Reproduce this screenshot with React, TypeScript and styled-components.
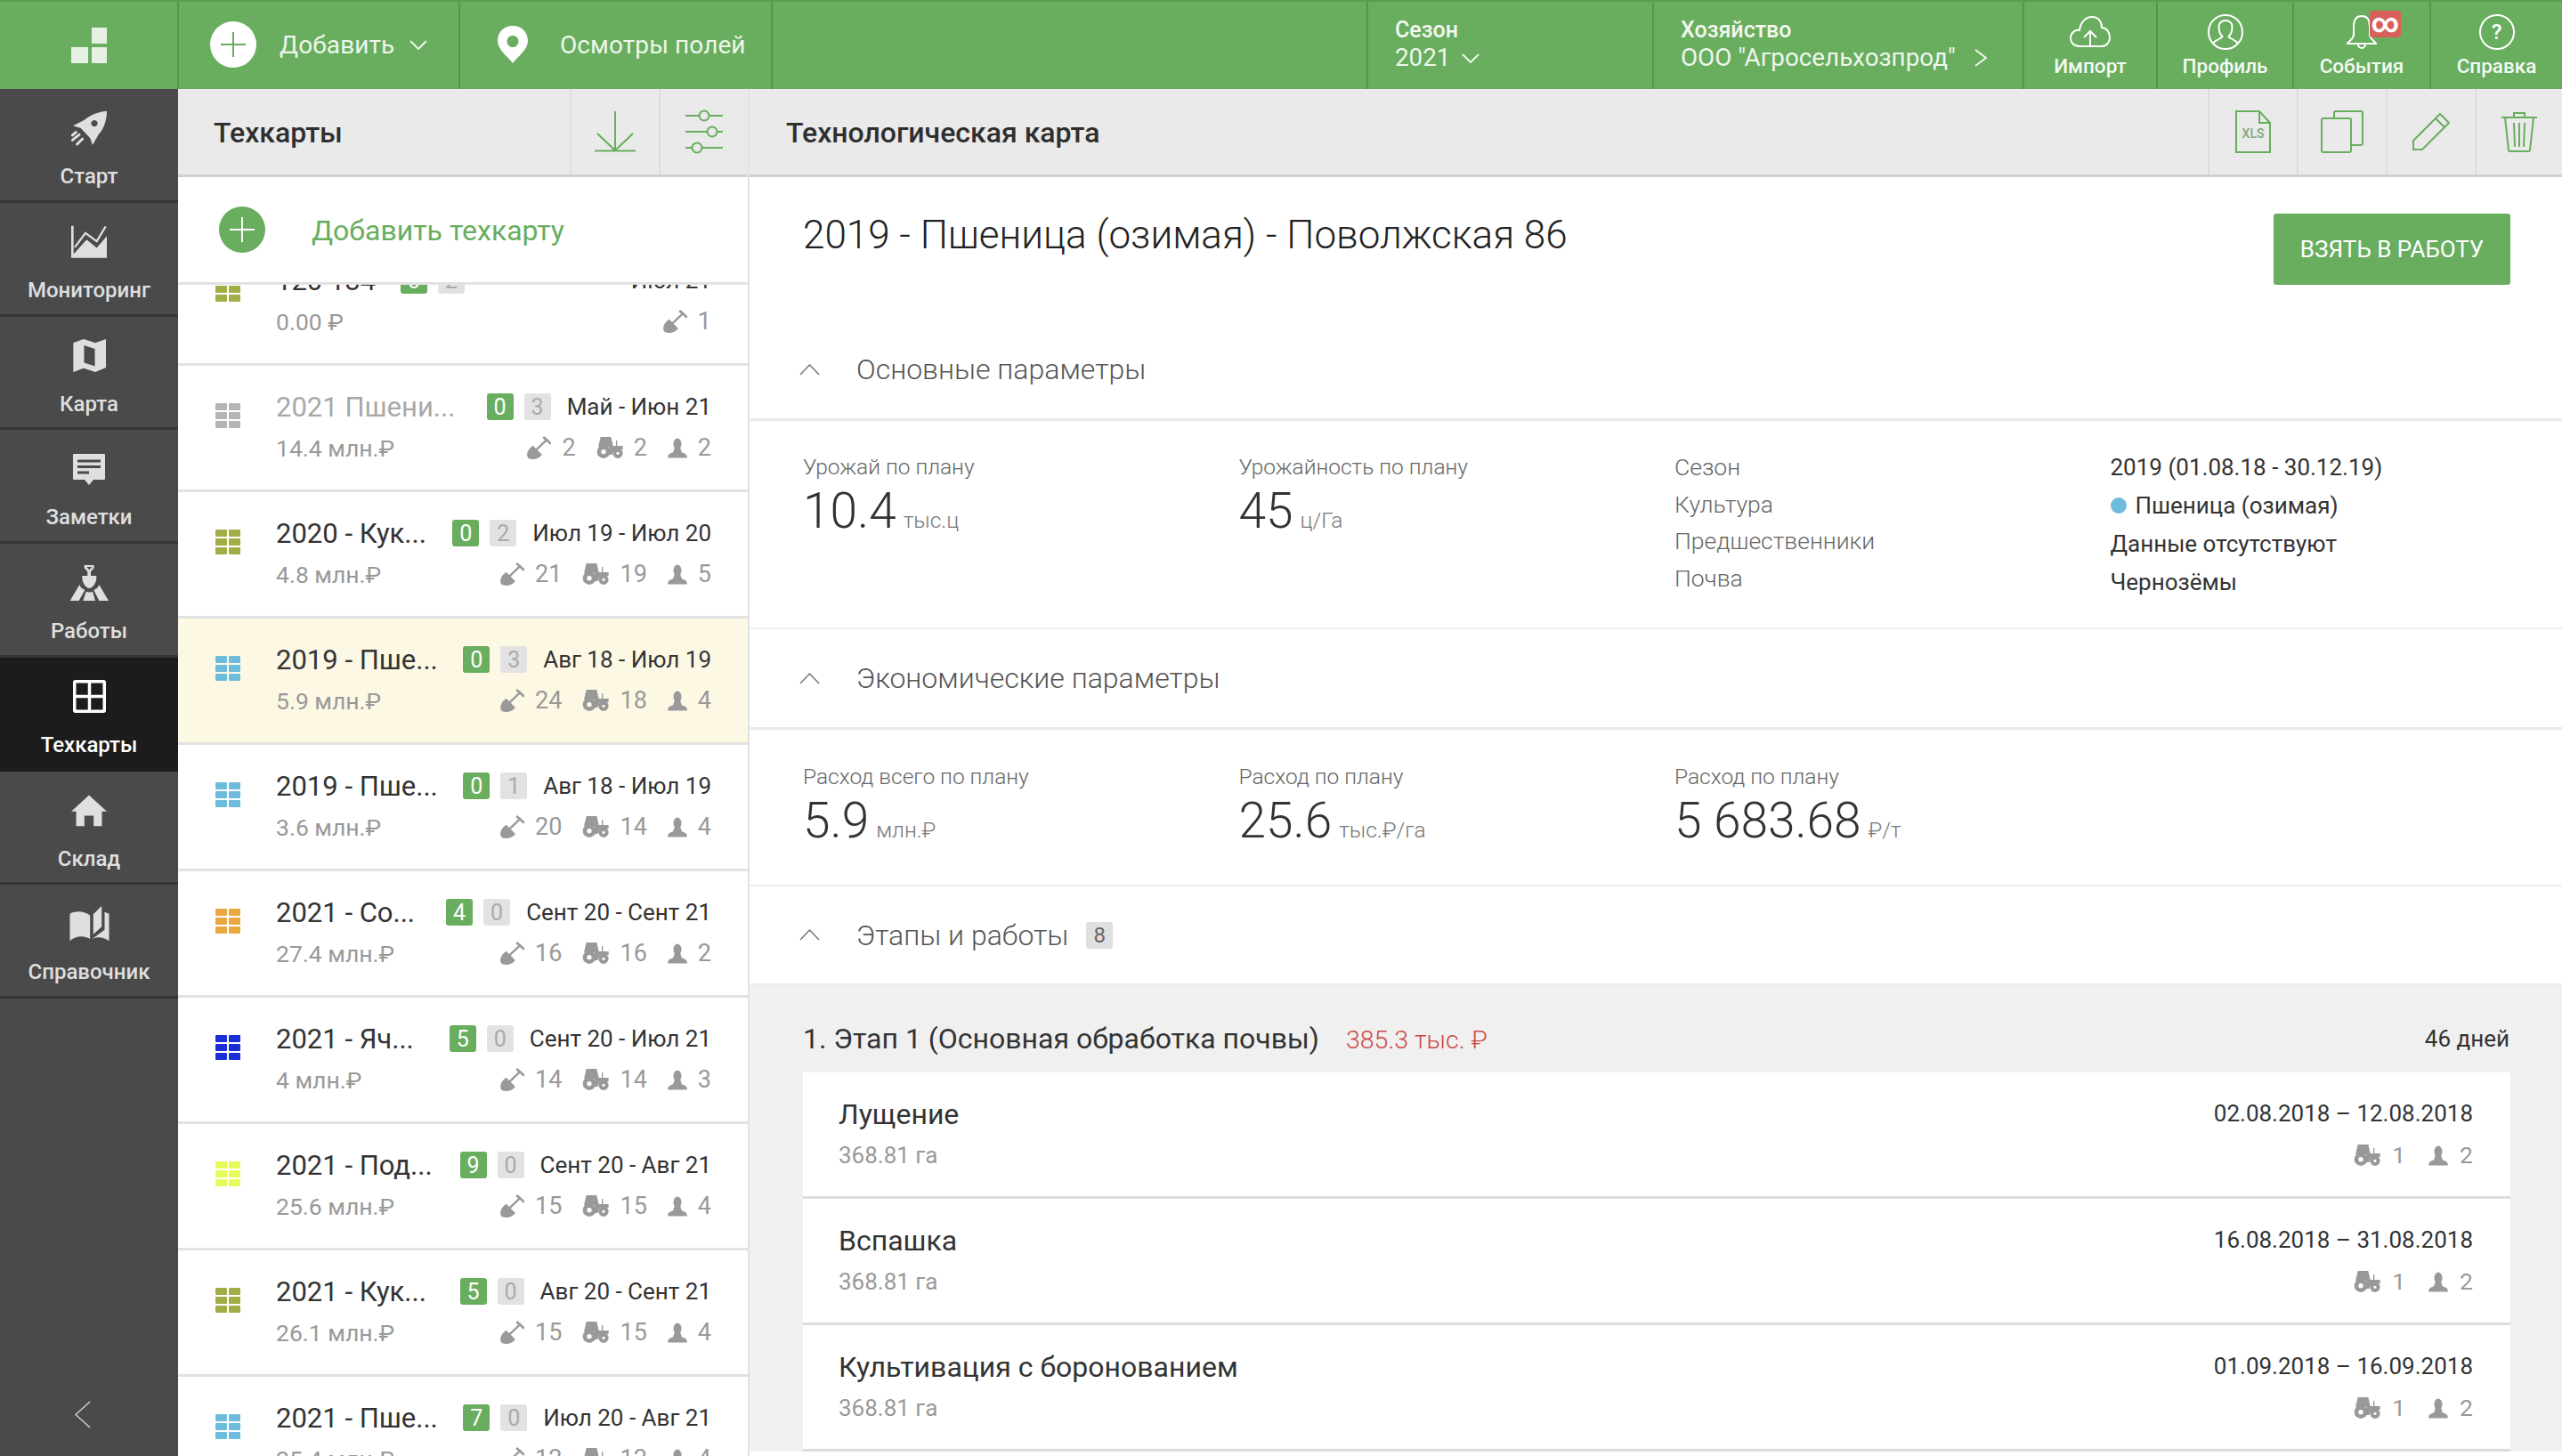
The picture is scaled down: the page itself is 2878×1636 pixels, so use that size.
import React from 'react';
import styled, { createGlobalStyle } from 'styled-components';

const GREEN = '#69ad5e';

const Global = createGlobalStyle`
  html, body { margin: 0; padding: 0; background: #fff; }
  body { font-family: Roboto, "Noto Sans", sans-serif; color: #333; }
  * { box-sizing: border-box; }
`;

const Page = styled.div`
  width: 2878px; height: 1636px; display: flex; flex-direction: column; overflow: hidden;
`;

/* ---------- top bar ---------- */
const TopBar = styled.header`
  height: 100px; flex: none; display: flex; background: ${GREEN}; color: #fff;
  border-top: 2px solid #5a9c50;
`;
const TopCell = styled.div<{ $w?: number; $grow?: boolean }>`
  ${p => (p.$w ? `width: ${p.$w}px; flex: none;` : '')}
  ${p => (p.$grow ? 'flex: 1;' : '')}
  display: flex; align-items: center; border-right: 2px solid #55964a;
`;
const LogoCell = styled(TopCell)`justify-content: center;`;
const ActionCell = styled(TopCell)<{ $pad: number }>`
  padding-left: ${p => p.$pad}px; margin-top: -2px;
`;
const ActionText = styled.span<{ $ml: number }>`
  font-size: 28px; color: #eef6ec; letter-spacing: .1px; white-space: nowrap; margin-left: ${p => p.$ml}px;
`;
const ActionChevron = styled.span`margin-left: 17px; line-height: 0; color: #eef6ec;`;
const InfoCell = styled(TopCell)<{ $pad: number }>`
  flex-direction: column; align-items: flex-start; justify-content: flex-start;
  padding-left: ${p => p.$pad}px; padding-top: 16px;
`;
const InfoLabel = styled.div`font-size: 25px; font-weight: 500; line-height: 31px; color: #f2f8f0;`;
const InfoValue = styled.div`
  font-size: 27.8px; line-height: 32px; display: flex; align-items: center; color: #eef6ec; white-space: nowrap;
`;
const InfoChevron = styled.span<{ $ml: number }>`margin-left: ${p => p.$ml}px; line-height: 0;`;
const NavCell = styled(TopCell)`
  flex-direction: column; justify-content: flex-start; position: relative; padding-top: 13px;
`;
const LastNavCell = styled(NavCell)`border-right: none;`;
const NavIcon = styled.div`height: 42px; display: flex; align-items: center; justify-content: center;`;
const NavLabel = styled.div`font-size: 22.5px; font-weight: 500; line-height: 28px; margin-top: 3px; color: #f4f9f3;`;
const InfinityBadge = styled.div`
  position: absolute; left: 85px; top: 10px; width: 35px; height: 30px; border-radius: 3px;
  background: #d9605a; color: #fff; font-size: 30px; font-weight: 700; line-height: 27px; text-align: center;
`;

/* ---------- body ---------- */
const Body = styled.div`flex: 1; display: flex; min-height: 0;`;

const Sidebar = styled.nav`
  width: 200px; flex: none; background: #4a4a4a; display: flex; flex-direction: column;
`;
const SideItem = styled.div<{ $active?: boolean }>`
  height: 127.75px; flex: none; display: flex; flex-direction: column; align-items: center;
  padding-top: 24px; background: ${p => (p.$active ? '#1c1c1c' : 'transparent')};
  border-bottom: 3px solid ${p => (p.$active ? '#1c1c1c' : '#353535')};
  color: ${p => (p.$active ? '#fff' : '#dfdfdf')};
`;
const SideIcon = styled.div`height: 40px; display: flex; align-items: center; justify-content: center;`;
const SideLabel = styled.div`font-size: 24px; font-weight: 500; line-height: 30px; margin-top: 19px;`;
const SideFooter = styled.div`margin-top: auto; padding: 0 0 31px 84px; color: #cfcfcf; line-height: 0;`;

const HeaderBar = styled.div`
  height: 99px; flex: none; display: flex; align-items: center; background: #eaeaea;
  border-bottom: 3px solid #cfcfcf;
`;
const HeaderTitle = styled.div<{ $pad: number }>`
  flex: 1; padding: 2px 0 0 ${p => p.$pad}px; font-size: 32px; font-weight: 500; color: #2f2f2f; white-space: nowrap;
`;
const HeaderBtn = styled.div<{ $w: number }>`
  width: ${p => p.$w}px; height: 96px; flex: none; display: flex; align-items: center; justify-content: center;
  border-left: 2px solid #dcdcdc;
`;

/* ---------- list ---------- */
const ListPanel = styled.section`
  width: 642px; flex: none; display: flex; flex-direction: column; border-right: 2px solid #e2e2e2; min-height: 0;
`;
const AddRow = styled.div`
  height: 121px; flex: none; display: flex; align-items: center; padding-left: 46px; gap: 52px;
  border-bottom: 3px solid #e2e2e2; background: #fff; position: relative; z-index: 1;
`;
const AddText = styled.div`font-size: 32px; color: ${GREEN}; padding-top: 2px;`;
const ListScroll = styled.div`flex: 1; overflow: hidden; min-height: 0;`;
const ListInner = styled.div`margin-top: -51px;`;
const Row = styled.div<{ $active?: boolean }>`
  height: 142px; display: flex; padding: 0 41px 0 42px;
  background: ${p => (p.$active ? '#fdf8e4' : '#fff')};
  border-bottom: 3px solid #e2e2e2;
`;
const RowIcon = styled.div`width: 28px; flex: none; margin: 42px 40px 0 0; line-height: 0;`;
const RowMain = styled.div`flex: 1; min-width: 0; padding-top: 26px;`;
const RowLine = styled.div`display: flex; align-items: center; justify-content: space-between; height: 40px;`;
const SubLine = styled(RowLine)`margin-top: 6px;`;
const RowTitle = styled.div<{ $muted?: boolean }>`
  font-size: 31px; white-space: nowrap; color: ${p => (p.$muted ? '#a8a8a8' : '#333')};
`;
const RowRight = styled.div`display: flex; align-items: center; gap: 12px;`;
const Badge = styled.div<{ $green?: boolean }>`
  width: 30px; height: 30px; border-radius: 3px; display: flex; align-items: center; justify-content: center;
  font-size: 25px; background: ${p => (p.$green ? GREEN : '#e2e2e2')}; color: ${p => (p.$green ? '#fff' : '#aaa')};
`;
const RowDate = styled.div<{ $min?: number }>`
  font-size: 26px; color: #333; margin-left: 6px; white-space: nowrap; text-align: right;
  ${p => (p.$min ? `min-width: ${p.$min}px;` : '')}
`;
const Money = styled.div`font-size: 26.5px; color: #999;`;
const StatGroup = styled.div`display: flex; align-items: center; gap: 23px;`;
const Stat = styled.div`display: flex; align-items: center; gap: 12px; font-size: 27px; color: #999; line-height: 1;`;

/* ---------- detail ---------- */
const Detail = styled.main`flex: 1; min-width: 0; display: flex; flex-direction: column; min-height: 0;`;
const DetailScroll = styled.div`flex: 1; overflow: hidden; min-height: 0;`;
const TitleRow = styled.div`
  height: 161px; display: flex; justify-content: space-between; align-items: flex-start; padding: 40px 58px 0 60px;
`;
const PageTitle = styled.h1`margin: 0; font-size: 44px; font-weight: 300; line-height: 50px; color: #222;`;
const TakeBtn = styled.button`
  width: 266px; height: 80px; margin-top: 1px; border: none; border-radius: 3px; background: ${GREEN}; color: #fff;
  font-family: inherit; font-size: 26px; padding: 0;
`;
const SectionHead = styled.div<{ $border?: boolean }>`
  height: ${p => (p.$border ? 113 : 109)}px; display: flex; align-items: center; padding-left: 56px;
  ${p => (p.$border ? 'border-bottom: 3px solid #eaeaea;' : '')}
`;
const SectionTitle = styled.div`
  font-size: 32px; font-weight: 300; color: #555; margin-left: 41px; margin-right: 20px;
`;
const CountBadge = styled.div`
  width: 30px; height: 30px; border-radius: 3px; background: #e0e0e0; color: #666;
  font-size: 24px; display: flex; align-items: center; justify-content: center;
`;
const StatBlock = styled.div<{ $h: number; $pt: number }>`
  height: ${p => p.$h}px; padding: ${p => p.$pt}px 0 0 60px;
  display: grid; grid-template-columns: repeat(4, 489.5px); align-content: start;
  border-bottom: 2px solid #f0f0f0;
`;
const Label = styled.div`font-size: 24.5px; font-weight: 300; line-height: 32px; color: #666; white-space: nowrap;`;
const KeyLabel = styled(Label)`font-size: 26.5px;`;
const Value = styled.div`
  font-size: 55px; font-weight: 300; line-height: 60px; margin-top: 3px; color: #333; white-space: nowrap;
`;
const Unit = styled.span`font-size: 24.5px; font-weight: 300; color: #777; margin-left: 8px;`;
const KeyCol = styled.div`display: flex; flex-direction: column; gap: 9.5px;`;
const ValCol = styled.div`display: flex; flex-direction: column; gap: 11px;`;
const ValText = styled.div`
  font-size: 26px; line-height: 32px; color: #333; display: flex; align-items: center; white-space: nowrap;
`;
const Dot = styled.span`
  width: 18px; height: 18px; border-radius: 50%; background: #6dbcdc; margin-right: 10px; flex: none;
`;
const Stages = styled.div`background: #f0f0f0; border-top: 2px solid #ececec; padding: 0 58px 0 60px;`;
const StageHead = styled.div`
  height: 98px; padding-top: 22px; display: flex; align-items: center; justify-content: space-between;
`;
const StageLeft = styled.div`display: flex; align-items: center; gap: 30px;`;
const StageTitle = styled.div`font-size: 32px; color: #333; white-space: nowrap;`;
const StageCost = styled.div`font-size: 28.5px; font-weight: 300; color: #cc4a46; white-space: nowrap; padding-top: 3px;`;
const StageDays = styled.div`font-size: 26px; color: #333; padding-right: 1px;`;
const Card = styled.div`
  height: 142px; background: #fff; border-bottom: 3px solid #dcdcdc; display: flex; justify-content: space-between;
  padding: 26px 42px 0 40px;
`;
const CardCol = styled.div<{ $right?: boolean }>`
  display: flex; flex-direction: column; ${p => (p.$right ? 'align-items: flex-end;' : '')}
`;
const CardTitle = styled.div`font-size: 32px; line-height: 42px; color: #333;`;
const CardSub = styled.div`font-size: 26px; line-height: 36px; margin-top: 7px; color: #999;`;
const CardDate = styled.div`font-size: 26px; line-height: 36px; margin-top: 2px; color: #333;`;
const CardStats = styled(StatGroup)`margin-top: 11px; height: 36px; gap: 26px;`;
const CardStat = styled(Stat)`font-size: 26.5px; gap: 13px;`;

/* ---------- icons ---------- */
const Shovel = () => (
  <svg width="27" height="27" viewBox="580 150 80 80" fill="#999">
    <path d="M600 182 L630 212 C622 226 592 232 583 222 C575 210 586 190 600 182Z" />
    <path d="M607 199 L648 160" stroke="#999" strokeWidth="7" fill="none" />
    <path d="M634 153 L660 176" stroke="#999" strokeWidth="8" fill="none" />
  </svg>
);
const Tractor = () => (
  <svg width="30" height="24" viewBox="336 582 90 72" fill="#999">
    <path d="M350 582 L385 582 L392 612 L425 612 L425 624 L396 624 L388 642 L378 642 L378 616 L342 616Z" />
    <circle cx="360" cy="632" r="15" fill="none" stroke="#999" strokeWidth="14" />
    <circle cx="408" cy="637" r="11" fill="none" stroke="#999" strokeWidth="12" />
    <path d="M404 594 V614" stroke="#999" strokeWidth="4" />
  </svg>
);
const Person = () => (
  <svg width="22" height="23" viewBox="580 584 68 70" fill="#999">
    <ellipse cx="614" cy="605" rx="14" ry="20" />
    <path d="M604 618 L624 618 L629 634 C643 638 649 644 647 653 L581 653 C579 644 585 638 599 634Z" />
  </svg>
);
const CellGrid = ({ color }: { color: string }) => (
  <svg width="28" height="28" viewBox="0 0 28 28" fill={color}>
    {[0, 10, 20].map(y => [0, 15].map(x => <rect key={`${x}-${y}`} x={x} y={y} width="13" height="8" rx="1" />))}
  </svg>
);
const Chevron = ({ dir, w, h, color = 'currentColor', sw = 2 }: { dir: 'up' | 'down' | 'left' | 'right'; w: number; h: number; color?: string; sw?: number }) => {
  const d = {
    down: `M1 1 L${w / 2} ${h - 1} L${w - 1} 1`,
    up: `M1 ${h - 1} L${w / 2} 1 L${w - 1} ${h - 1}`,
    left: `M${w - 1} 1 L1 ${h / 2} L${w - 1} ${h - 1}`,
    right: `M1 1 L${w - 1} ${h / 2} L1 ${h - 1}`,
  }[dir];
  return <svg width={w} height={h} viewBox={`0 0 ${w} ${h}`} fill="none" stroke={color} strokeWidth={sw}><path d={d} /></svg>;
};
const Logo = () => (
  <svg width="40" height="40" viewBox="0 0 40 40" fill="#e6f1e3">
    <rect x="23" y="0" width="17" height="18" /><rect x="0" y="22" width="19" height="18" /><rect x="23" y="22" width="17" height="18" />
  </svg>
);
const PlusCircle = ({ bg, fg }: { bg: string; fg: string }) => (
  <svg width="52" height="52" viewBox="0 0 52 52">
    <circle cx="26" cy="26" r="26" fill={bg} />
    <path d="M26 12 V40 M12 26 H40" stroke={fg} strokeWidth="2" />
  </svg>
);
const Pin = () => (
  <svg width="34" height="42" viewBox="0 0 34 42">
    <path fillRule="evenodd" fill="#fff" d="M17 0 C7 0 0 7 0 17 C0 27 12 35 17 42 C22 35 34 27 34 17 C34 7 27 0 17 0Z M17 11 a6.5 6.5 0 1 0 0.01 0Z" />
  </svg>
);
const Cloud = () => (
  <svg width="46" height="36" viewBox="0 0 46 36" fill="none" stroke="#fff" strokeWidth="2">
    <path d="M11 34 C4 34 1 29 1 25 C1 19 6 15 11 16 C12 7 18 1 25 1 C32 1 36 6 36 13 C41 13 45 18 45 24 C45 30 41 34 36 34Z" />
    <path d="M23 34 V18 M16 24 L23 17 L30 24" />
  </svg>
);
const Profile = () => (
  <svg width="40" height="40" viewBox="0 0 40 40" fill="none" stroke="#fff" strokeWidth="2">
    <circle cx="20" cy="20" r="19" />
    <path d="M6 33 C9 28 15 28 16.5 25 C13 22 12.5 17 12.5 14 C12.5 10 15.5 7 20 7 C24.5 7 27.5 10 27.5 14 C27.5 17 27 22 23.5 25 C25 28 31 28 34 33" />
  </svg>
);
const Bell = () => (
  <svg width="34" height="38" viewBox="0 0 34 38" fill="none" stroke="#fff" strokeWidth="2">
    <path d="M17 1 C10 1 8 7 8 13 V22 C8 27 3 28 1 32 H33 C31 28 26 27 26 22 V13 C26 7 24 1 17 1Z" />
    <path d="M13 33 a4 4 0 0 0 8 0" />
  </svg>
);
const HelpCircle = styled.div`
  width: 40px; height: 40px; border: 2px solid #fff; border-radius: 50%; display: flex; align-items: center;
  justify-content: center; font-size: 24px; font-weight: 500; color: #fff;
`;
const Rocket = () => (
  <svg width="40" height="40" viewBox="120 40 120 120" fill="currentColor">
    <path fillRule="evenodd" d="M240 42 C205 46 180 58 165 72 L126 92 L152 100 L184 134 L192 157 L212 122 C232 100 240 70 240 42Z M198 73 a11 11 0 1 0 0.01 0Z" />
    <path d="M124 124 L136 114 M124 140 L147 122 M140 154 L158 136" stroke="currentColor" strokeWidth="9" fill="none" strokeLinecap="round" />
  </svg>
);
const ChartIcon = () => (
  <svg width="40" height="37" viewBox="120 430 120 110" fill="currentColor">
    <path d="M120 432 L128 432 L128 527 L172 478 L206 506 L240 466 L240 540 L120 540Z" />
    <path d="M132 504 L168 456 L206 484 L236 434" fill="none" stroke="currentColor" strokeWidth="7" />
  </svg>
);
const MapIcon = () => (
  <svg width="37" height="37" viewBox="125 815 110 110" fill="currentColor">
    <path fillRule="evenodd" d="M126 828 L160 815 L200 828 L235 815 L235 910 L200 925 L160 912 L126 925Z M162 836 L162 894 L198 906 L198 848Z" />
  </svg>
);
const NotesIcon = () => (
  <svg width="36" height="35" viewBox="0 0 36 35">
    <path fill="currentColor" d="M1 0 H35 a1 1 0 0 1 1 1 V28 a1 1 0 0 1 -1 1 H23 L18 35 L13 29 H1 a1 1 0 0 1 -1 -1 V1 a1 1 0 0 1 1 -1Z" />
    <path d="M5 8 H31 M5 14.5 H31 M5 21 H18" stroke="#4a4a4a" strokeWidth="3" />
  </svg>
);
const WorksIcon = () => (
  <svg width="44" height="42" viewBox="114 45 132 126" fill="currentColor">
    <path d="M164 48 H197 V58 L186 70 V84 H205 C206 104 196 124 181 126 C166 124 156 104 157 84 H175 V70 L164 58Z M172 54 L181 64 L190 54Z" fillRule="evenodd" />
    <path d="M116 168 L148 114 C150 122 156 128 166 132 L146 168Z M160 168 L170 137 C176 140 186 140 192 137 L201 168Z M246 168 L214 114 C212 122 206 128 196 132 L214 168Z" />
  </svg>
);
const GridIcon = () => (
  <svg width="37" height="37" viewBox="0 0 37 37" fill="none" stroke="currentColor" strokeWidth="3.5">
    <rect x="1.75" y="1.75" width="33.5" height="33.5" rx="1" />
    <path d="M18.5 2 V35 M2 18.5 H35" />
  </svg>
);
const HomeIcon = () => (
  <svg width="40" height="36" viewBox="122 824 116 104" fill="currentColor">
    <path d="M122 878 L180 825 L238 878 L222 878 L222 926 L195 926 L195 892 L165 892 L165 926 L138 926 L138 878Z" />
  </svg>
);
const BookIcon = () => (
  <svg width="45" height="40" viewBox="112 1200 134 120" fill="currentColor">
    <path d="M113 1226 C135 1214 165 1218 181 1232 L181 1311 C160 1298 132 1300 113 1318Z" />
    <path d="M192 1228 L220 1200 L220 1270 L192 1296Z" />
    <path d="M230 1220 L245 1226 L245 1318 C226 1304 206 1302 188 1311 L230 1280Z" />
  </svg>
);
const Download = () => (
  <svg width="46" height="46" viewBox="0 0 46 46" fill="none" stroke={GREEN} strokeWidth="2">
    <path d="M23 0 V44 M3 25 L23 44 L43 25 M0 44.5 H46" />
  </svg>
);
const Sliders = () => (
  <svg width="42" height="50" viewBox="0 0 42 50" fill="none" stroke={GREEN} strokeWidth="2">
    <path d="M0 7 H15 M27 7 H42 M0 25 H24 M36 25 H42 M0 43 H7 M19 43 H42" />
    <circle cx="21" cy="7" r="5.5" /><circle cx="30" cy="25" r="5.5" /><circle cx="13" cy="43" r="5.5" />
  </svg>
);
const Xls = () => (
  <svg width="42" height="48" viewBox="0 0 42 48" fill="none" stroke={GREEN} strokeWidth="2">
    <path d="M2 1 H28 L40 14 V47 H2Z M28 1 V14 H40" />
    <text x="21" y="31" textAnchor="middle" fontFamily="Roboto, sans-serif" fontSize="14" fontWeight="500" fill="#7fa878" stroke="none">XLS</text>
  </svg>
);
const Copy = () => (
  <svg width="48" height="48" viewBox="0 0 48 48" fill="none" stroke={GREEN} strokeWidth="2">
    <path d="M15 8 V3 a2 2 0 0 1 2 -2 H45 a2 2 0 0 1 2 2 V37 a2 2 0 0 1 -2 2 H34" />
    <rect x="1" y="9" width="33" height="38" rx="2" />
  </svg>
);
const Pencil = () => (
  <svg width="42" height="42" viewBox="0 0 42 42" fill="none" stroke={GREEN} strokeWidth="2">
    <path d="M1 31 L31 1 L41 11 L11 41 H1Z M26 6 L36 16" />
  </svg>
);
const Trash = () => (
  <svg width="40" height="46" viewBox="0 0 40 46" fill="none" stroke={GREEN} strokeWidth="2">
    <path d="M0 7 H40 M14 7 V2 H26 V7 M4 7 L8 44 a1.5 1.5 0 0 0 1.5 1 H30.5 a1.5 1.5 0 0 0 1.5 -1 L36 7 M14 13 L15 40 M20 13 V40 M26 13 L25 40" />
  </svg>
);

/* ---------- data ---------- */
const OLIVE = '#a3ad45', BLUE = '#6dbcdc';
type RowData = { title: string; color: string; a: number; b: number; date: string; money: string; s?: number; t?: number; p?: number; muted?: boolean; active?: boolean; minDate?: number };
const rows: RowData[] = [
  { title: '120 134', color: OLIVE, a: 0, b: 2, date: 'Июл 21', money: '0.00 ₽', s: 1, minDate: 259 },
  { title: '2021 Пшени...', color: '#b5b5b5', a: 0, b: 3, date: 'Май - Июн 21', money: '14.4 млн.₽', s: 2, t: 2, p: 2, muted: true },
  { title: '2020 - Кук...', color: OLIVE, a: 0, b: 2, date: 'Июл 19 - Июл 20', money: '4.8 млн.₽', s: 21, t: 19, p: 5 },
  { title: '2019 - Пше...', color: BLUE, a: 0, b: 3, date: 'Авг 18 - Июл 19', money: '5.9 млн.₽', s: 24, t: 18, p: 4, active: true },
  { title: '2019 - Пше...', color: BLUE, a: 0, b: 1, date: 'Авг 18 - Июл 19', money: '3.6 млн.₽', s: 20, t: 14, p: 4 },
  { title: '2021 - Со...', color: '#e9a83f', a: 4, b: 0, date: 'Сент 20 - Сент 21', money: '27.4 млн.₽', s: 16, t: 16, p: 2 },
  { title: '2021 - Яч...', color: '#1a2fd8', a: 5, b: 0, date: 'Сент 20 - Июл 21', money: '4 млн.₽', s: 14, t: 14, p: 3 },
  { title: '2021 - Под...', color: '#e6fb5a', a: 9, b: 0, date: 'Сент 20 - Авг 21', money: '25.6 млн.₽', s: 15, t: 15, p: 4 },
  { title: '2021 - Кук...', color: OLIVE, a: 5, b: 0, date: 'Авг 20 - Сент 21', money: '26.1 млн.₽', s: 15, t: 15, p: 4 },
  { title: '2021 - Пше...', color: BLUE, a: 7, b: 0, date: 'Июл 20 - Авг 21', money: '25.4 млн.₽', s: 12, t: 12, p: 4 },
];
const side = [
  { label: 'Старт', icon: <Rocket /> },
  { label: 'Мониторинг', icon: <ChartIcon /> },
  { label: 'Карта', icon: <MapIcon /> },
  { label: 'Заметки', icon: <NotesIcon /> },
  { label: 'Работы', icon: <WorksIcon /> },
  { label: 'Техкарты', icon: <GridIcon />, active: true },
  { label: 'Склад', icon: <HomeIcon /> },
  { label: 'Справочник', icon: <BookIcon /> },
];
const works = [
  { title: 'Лущение', date: '02.08.2018 – 12.08.2018' },
  { title: 'Вспашка', date: '16.08.2018 – 31.08.2018' },
  { title: 'Культивация с боронованием', date: '01.09.2018 – 16.09.2018' },
];

export default function App() {
  return (
    <Page>
      <Global />
      <TopBar>
        <LogoCell $w={201}><Logo /></LogoCell>
        <ActionCell $w={316} $pad={35}>
          <PlusCircle bg="#fff" fg={GREEN} />
          <ActionText $ml={26}>Добавить</ActionText>
          <ActionChevron><Chevron dir="down" w={20} h={11} /></ActionChevron>
        </ActionCell>
        <ActionCell $w={351} $pad={42}>
          <Pin />
          <ActionText $ml={36}>Осмотры полей</ActionText>
        </ActionCell>
        <TopCell $grow />
        <InfoCell $w={321} $pad={30}>
          <InfoLabel>Сезон</InfoLabel>
          <InfoValue>2021<InfoChevron $ml={12}><Chevron dir="down" w={20} h={11} /></InfoChevron></InfoValue>
        </InfoCell>
        <InfoCell $w={416} $pad={30}>
          <InfoLabel>Хозяйство</InfoLabel>
          <InfoValue>ООО "Агросельхозпрод"<InfoChevron $ml={21}><Chevron dir="right" w={14} h={20} /></InfoChevron></InfoValue>
        </InfoCell>
        <NavCell $w={150}><NavIcon><Cloud /></NavIcon><NavLabel>Импорт</NavLabel></NavCell>
        <NavCell $w={153}><NavIcon><Profile /></NavIcon><NavLabel>Профиль</NavLabel></NavCell>
        <NavCell $w={154}>
          <NavIcon><Bell /></NavIcon><NavLabel>События</NavLabel>
          <InfinityBadge>∞</InfinityBadge>
        </NavCell>
        <LastNavCell $w={147}><NavIcon><HelpCircle>?</HelpCircle></NavIcon><NavLabel>Справка</NavLabel></LastNavCell>
      </TopBar>
      <Body>
        <Sidebar>
          {side.map(s => (
            <SideItem key={s.label} $active={s.active}>
              <SideIcon>{s.icon}</SideIcon>
              <SideLabel>{s.label}</SideLabel>
            </SideItem>
          ))}
          <SideFooter><Chevron dir="left" w={18} h={31} sw={1.5} /></SideFooter>
        </Sidebar>
        <ListPanel>
          <HeaderBar>
            <HeaderTitle $pad={40}>Техкарты</HeaderTitle>
            <HeaderBtn $w={100}><Download /></HeaderBtn>
            <HeaderBtn $w={100}><Sliders /></HeaderBtn>
          </HeaderBar>
          <AddRow>
            <PlusCircle bg={GREEN} fg="#fff" />
            <AddText>Добавить техкарту</AddText>
          </AddRow>
          <ListScroll>
            <ListInner>
              {rows.map((r, i) => (
                <Row key={i} $active={r.active}>
                  <RowIcon><CellGrid color={r.color} /></RowIcon>
                  <RowMain>
                    <RowLine>
                      <RowTitle $muted={r.muted}>{r.title}</RowTitle>
                      <RowRight>
                        <Badge $green>{r.a}</Badge>
                        <Badge>{r.b}</Badge>
                        <RowDate $min={r.minDate}>{r.date}</RowDate>
                      </RowRight>
                    </RowLine>
                    <SubLine>
                      <Money>{r.money}</Money>
                      <StatGroup>
                        {r.s !== undefined && <Stat><Shovel />{r.s}</Stat>}
                        {r.t !== undefined && <Stat><Tractor />{r.t}</Stat>}
                        {r.p !== undefined && <Stat><Person />{r.p}</Stat>}
                      </StatGroup>
                    </SubLine>
                  </RowMain>
                </Row>
              ))}
            </ListInner>
          </ListScroll>
        </ListPanel>
        <Detail>
          <HeaderBar>
            <HeaderTitle $pad={41}>Технологическая карта</HeaderTitle>
            <HeaderBtn $w={100}><Xls /></HeaderBtn>
            <HeaderBtn $w={100}><Copy /></HeaderBtn>
            <HeaderBtn $w={100}><Pencil /></HeaderBtn>
            <HeaderBtn $w={98}><Trash /></HeaderBtn>
          </HeaderBar>
          <DetailScroll>
            <TitleRow>
              <PageTitle>2019 - Пшеница (озимая) - Поволжская 86</PageTitle>
              <TakeBtn>ВЗЯТЬ В РАБОТУ</TakeBtn>
            </TitleRow>
            <SectionHead $border>
              <Chevron dir="up" w={23} h={13} color="#777" sw={1.5} />
              <SectionTitle>Основные параметры</SectionTitle>
            </SectionHead>
            <StatBlock $h={234} $pt={36}>
              <div><Label>Урожай по плану</Label><Value>10.4<Unit>тыс.ц</Unit></Value></div>
              <div><Label>Урожайность по плану</Label><Value>45<Unit>ц/Га</Unit></Value></div>
              <KeyCol>
                <KeyLabel>Сезон</KeyLabel><KeyLabel>Культура</KeyLabel><KeyLabel>Предшественники</KeyLabel><KeyLabel>Почва</KeyLabel>
              </KeyCol>
              <ValCol>
                <ValText>2019 (01.08.18 - 30.12.19)</ValText>
                <ValText><Dot />Пшеница (озимая)</ValText>
                <ValText>Данные отсутствуют</ValText>
                <ValText>Чернозёмы</ValText>
              </ValCol>
            </StatBlock>
            <SectionHead $border>
              <Chevron dir="up" w={23} h={13} color="#777" sw={1.5} />
              <SectionTitle>Экономические параметры</SectionTitle>
            </SectionHead>
            <StatBlock $h={176} $pt={37}>
              <div><Label>Расход всего по плану</Label><Value>5.9<Unit>млн.₽</Unit></Value></div>
              <div><Label>Расход по плану</Label><Value>25.6<Unit>тыс.₽/га</Unit></Value></div>
              <div><Label>Расход по плану</Label><Value>5 683.68<Unit>₽/т</Unit></Value></div>
            </StatBlock>
            <SectionHead>
              <Chevron dir="up" w={23} h={13} color="#777" sw={1.5} />
              <SectionTitle>Этапы и работы</SectionTitle>
              <CountBadge>8</CountBadge>
            </SectionHead>
            <Stages>
              <StageHead>
                <StageLeft>
                  <StageTitle>1. Этап 1 (Основная обработка почвы)</StageTitle>
                  <StageCost>385.3 тыс. ₽</StageCost>
                </StageLeft>
                <StageDays>46 дней</StageDays>
              </StageHead>
              {works.map(w => (
                <Card key={w.title}>
                  <CardCol>
                    <CardTitle>{w.title}</CardTitle>
                    <CardSub>368.81 га</CardSub>
                  </CardCol>
                  <CardCol $right>
                    <CardDate>{w.date}</CardDate>
                    <CardStats>
                      <CardStat><Tractor />1</CardStat>
                      <CardStat><Person />2</CardStat>
                    </CardStats>
                  </CardCol>
                </Card>
              ))}
            </Stages>
          </DetailScroll>
        </Detail>
      </Body>
    </Page>
  );
}
